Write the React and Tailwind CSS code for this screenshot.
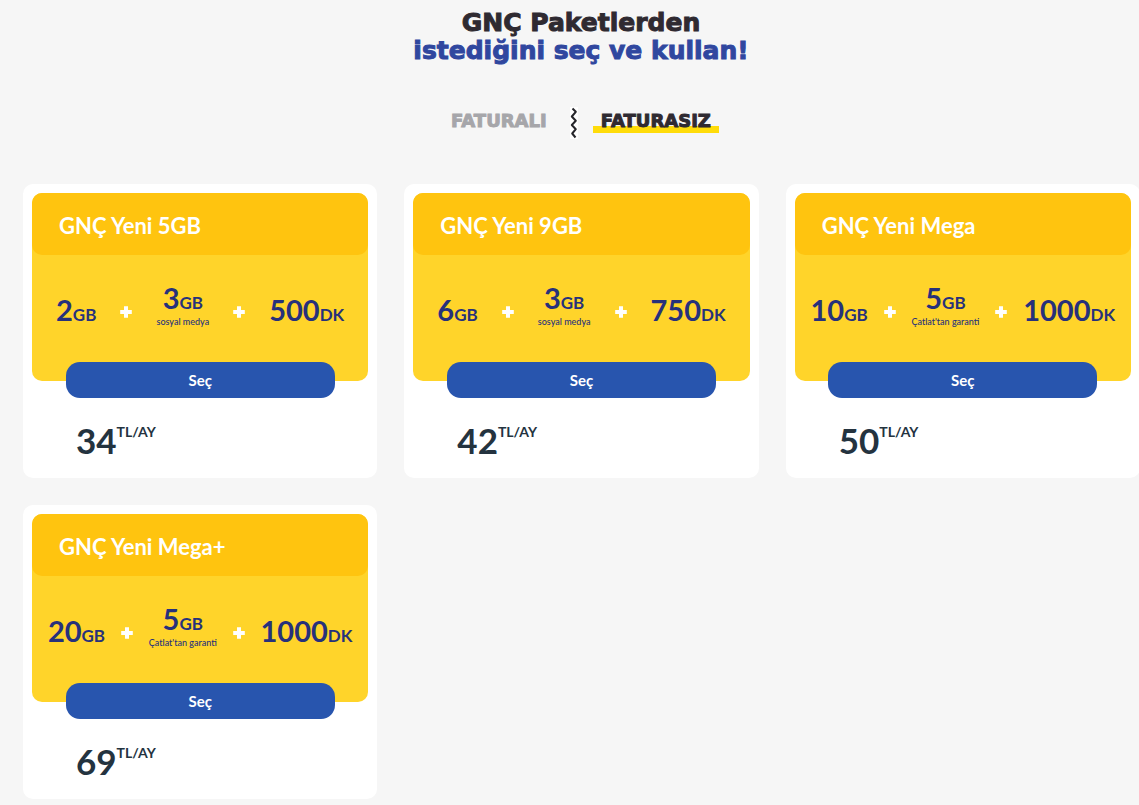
import React, { useState } from 'react';

const packages = [
  { id: 1, name: 'GNÇ Yeni 5GB', data: '2', extra: '3', note: 'sosyal medya', minutes: '500', price: '34' },
  { id: 2, name: 'GNÇ Yeni 9GB', data: '6', extra: '3', note: 'sosyal medya', minutes: '750', price: '42' },
  { id: 3, name: 'GNÇ Yeni Mega', data: '10', extra: '5', note: "Çatlat'tan garanti", minutes: '1000', price: '50' },
  { id: 4, name: 'GNÇ Yeni Mega+', data: '20', extra: '5', note: "Çatlat'tan garanti", minutes: '1000', price: '69' },
];

const PlusIcon = () => (
  <svg className="h-3 w-3 shrink-0" viewBox="0 0 12 12" fill="#fff" aria-hidden="true">
    <path d="M4 0.3h4v3.7h3.8v4H8v3.7H4V8H0.2V4H4z" />
  </svg>
);

const ZigzagIcon = () => (
  <svg className="h-8 w-2 bg-white" viewBox="0 0 8 32" fill="none" aria-hidden="true">
    <path
      d="M2.5 1.5L5.8 4.8L1.8 9.5L5.8 13.8L1.8 18L5.8 22.2L2.2 26.5L5.5 30.5"
      stroke="#26262b"
      strokeWidth="2"
      strokeLinejoin="round"
    />
  </svg>
);

const Amount = ({ value, unit }) => (
  <p className="text-[29px] leading-[30px] font-bold whitespace-nowrap">
    {value}
    <span className="text-[17px]">{unit}</span>
  </p>
);

const Tab = ({ label, active, onClick }) => (
  <button
    type="button"
    onClick={onClick}
    className={`mb-1 px-2 text-[18px] leading-6 font-bold cursor-pointer [-webkit-text-stroke:1px_currentColor] ${
      active
        ? 'text-[#2f2a31] bg-linear-to-b from-transparent from-[70%] to-[#ffdc0a] to-[70%]'
        : 'text-[#a6a6aa]'
    }`}
  >
    {label}
  </button>
);

const PackageCard = ({ item }) => (
  <article className="rounded-[10px] bg-white p-[9px]">
    <div className="rounded-[10px] bg-[#ffd42a]">
      <h2 className="rounded-[10px] bg-[#ffc40f] px-[27px] pt-[19px] pb-[15px] text-[22px] leading-7 font-bold text-white">
        {item.name}
      </h2>

      {/* Package contents */}
      <div className="flex h-[126px] items-start justify-evenly pt-7 text-[#27317b]">
        <div className="pt-3">
          <Amount value={item.data} unit="GB" />
        </div>
        <div className="pt-[23px]">
          <PlusIcon />
        </div>
        <div className="text-center">
          <Amount value={item.extra} unit="GB" />
          <p className="text-[9px] leading-2 font-medium whitespace-nowrap">{item.note}</p>
        </div>
        <div className="pt-[23px]">
          <PlusIcon />
        </div>
        <div className="pt-3">
          <Amount value={item.minutes} unit="DK" />
        </div>
      </div>
    </div>

    <button
      type="button"
      className="relative mx-auto -mt-[19px] block h-9 w-4/5 cursor-pointer rounded-[14px] bg-[#2855ae] text-[15px] font-bold text-white"
    >
      Seç
    </button>

    {/* Price */}
    <div className="flex items-start pt-6 pb-[11px] pl-11 font-bold text-[#24333f]">
      <span className="text-[35px] leading-9">{item.price}</span>
      <span className="text-[14px] leading-5">TL/AY</span>
    </div>
  </article>
);

const App = () => {
  const [tab, setTab] = useState('FATURASIZ');

  return (
    <main className="min-h-screen overflow-hidden bg-[#f6f6f6] pb-1.5 pl-[23px] font-['Lato',sans-serif]">
      <h1 className="pt-[9px] text-center font-['DejaVu_Sans',sans-serif] text-[25px] leading-7 font-bold text-[#2f2a31] [-webkit-text-stroke:1px_currentColor]">
        GNÇ Paketlerden
        <span className="block text-[#30479f]">istediğini seç ve kullan!</span>
      </h1>

      <div className="mt-[42px] flex items-center justify-center gap-[15px] font-['DejaVu_Sans',sans-serif]">
        <Tab label="FATURALI" active={tab === 'FATURALI'} onClick={() => setTab('FATURALI')} />
        <ZigzagIcon />
        <Tab label="FATURASIZ" active={tab === 'FATURASIZ'} onClick={() => setTab('FATURASIZ')} />
      </div>

      <div className="-mr-px mt-[45px] grid grid-cols-3 gap-[27px]">
        {packages.map((item) => (
          <PackageCard key={item.id} item={item} />
        ))}
      </div>
    </main>
  );
};

export default App;
